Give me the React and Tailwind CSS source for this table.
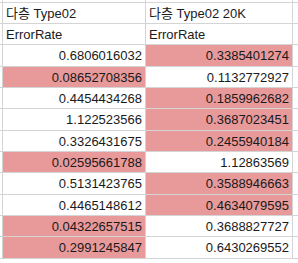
import React from 'react';

const HL = 'bg-[#e8999a]';

const ROWS = [
  ['0.6806016032', false, '0.3385401274', true],
  ['0.08652708356', true, '0.1132772927', false],
  ['0.4454434268', false, '0.1859962682', true],
  ['1.122523566', false, '0.3687023451', true],
  ['0.3326431675', false, '0.2455940184', true],
  ['0.02595661788', true, '1.12863569', false],
  ['0.5131423765', false, '0.3588946663', true],
  ['0.4465148612', false, '0.4634079595', true],
  ['0.04322657515', true, '0.3688827727', false],
  ['0.2991245847', true, '0.6430269552', false],
];

const heights = ['h-[21px]', 'h-[21px]', 'h-[22px]'];

export default function App() {
  const font = { fontFamily: '"Liberation Sans", Arial, "Noto Sans CJK KR", sans-serif' };
  const cell = (text, hl, w, align, key) => (
    <div key={key} className={`${w} border-r border-[#d4d4d4] px-[3px] flex items-center ${align} ${hl ? HL : ''}`}>
      <span className="leading-none">{text}</span>
    </div>
  );
  const rows = [
    ['다층 Type02', false, '다층 Type02 20K', false, 'justify-start'],
    ['ErrorRate', false, 'ErrorRate', false, 'justify-start'],
    ...ROWS.map(r => [...r, 'justify-end']),
  ];
  return (
    <div className="w-[298px] h-[263px] bg-white overflow-hidden text-[13px] text-[#1a1a1a]" style={font}>
      <div className="flex h-[3px] border-b border-[#d4d4d4]">
        <div className="w-[3px] border-r border-[#d4d4d4]" />
        <div className="w-[143px] border-r border-[#d4d4d4]" />
        <div className="w-[147px] border-r border-[#d4d4d4]" />
      </div>
      {rows.map((r, i) => (
        <div key={i} className={`flex ${heights[i % 3]} border-b border-[#d4d4d4]`}>
          <div className="w-[3px] border-r border-[#d4d4d4]" />
          {cell(r[0], r[1], 'w-[143px]', r[4], 'a')}
          {cell(r[2], r[3], 'w-[147px]', r[4], 'b')}
        </div>
      ))}
    </div>
  );
}
